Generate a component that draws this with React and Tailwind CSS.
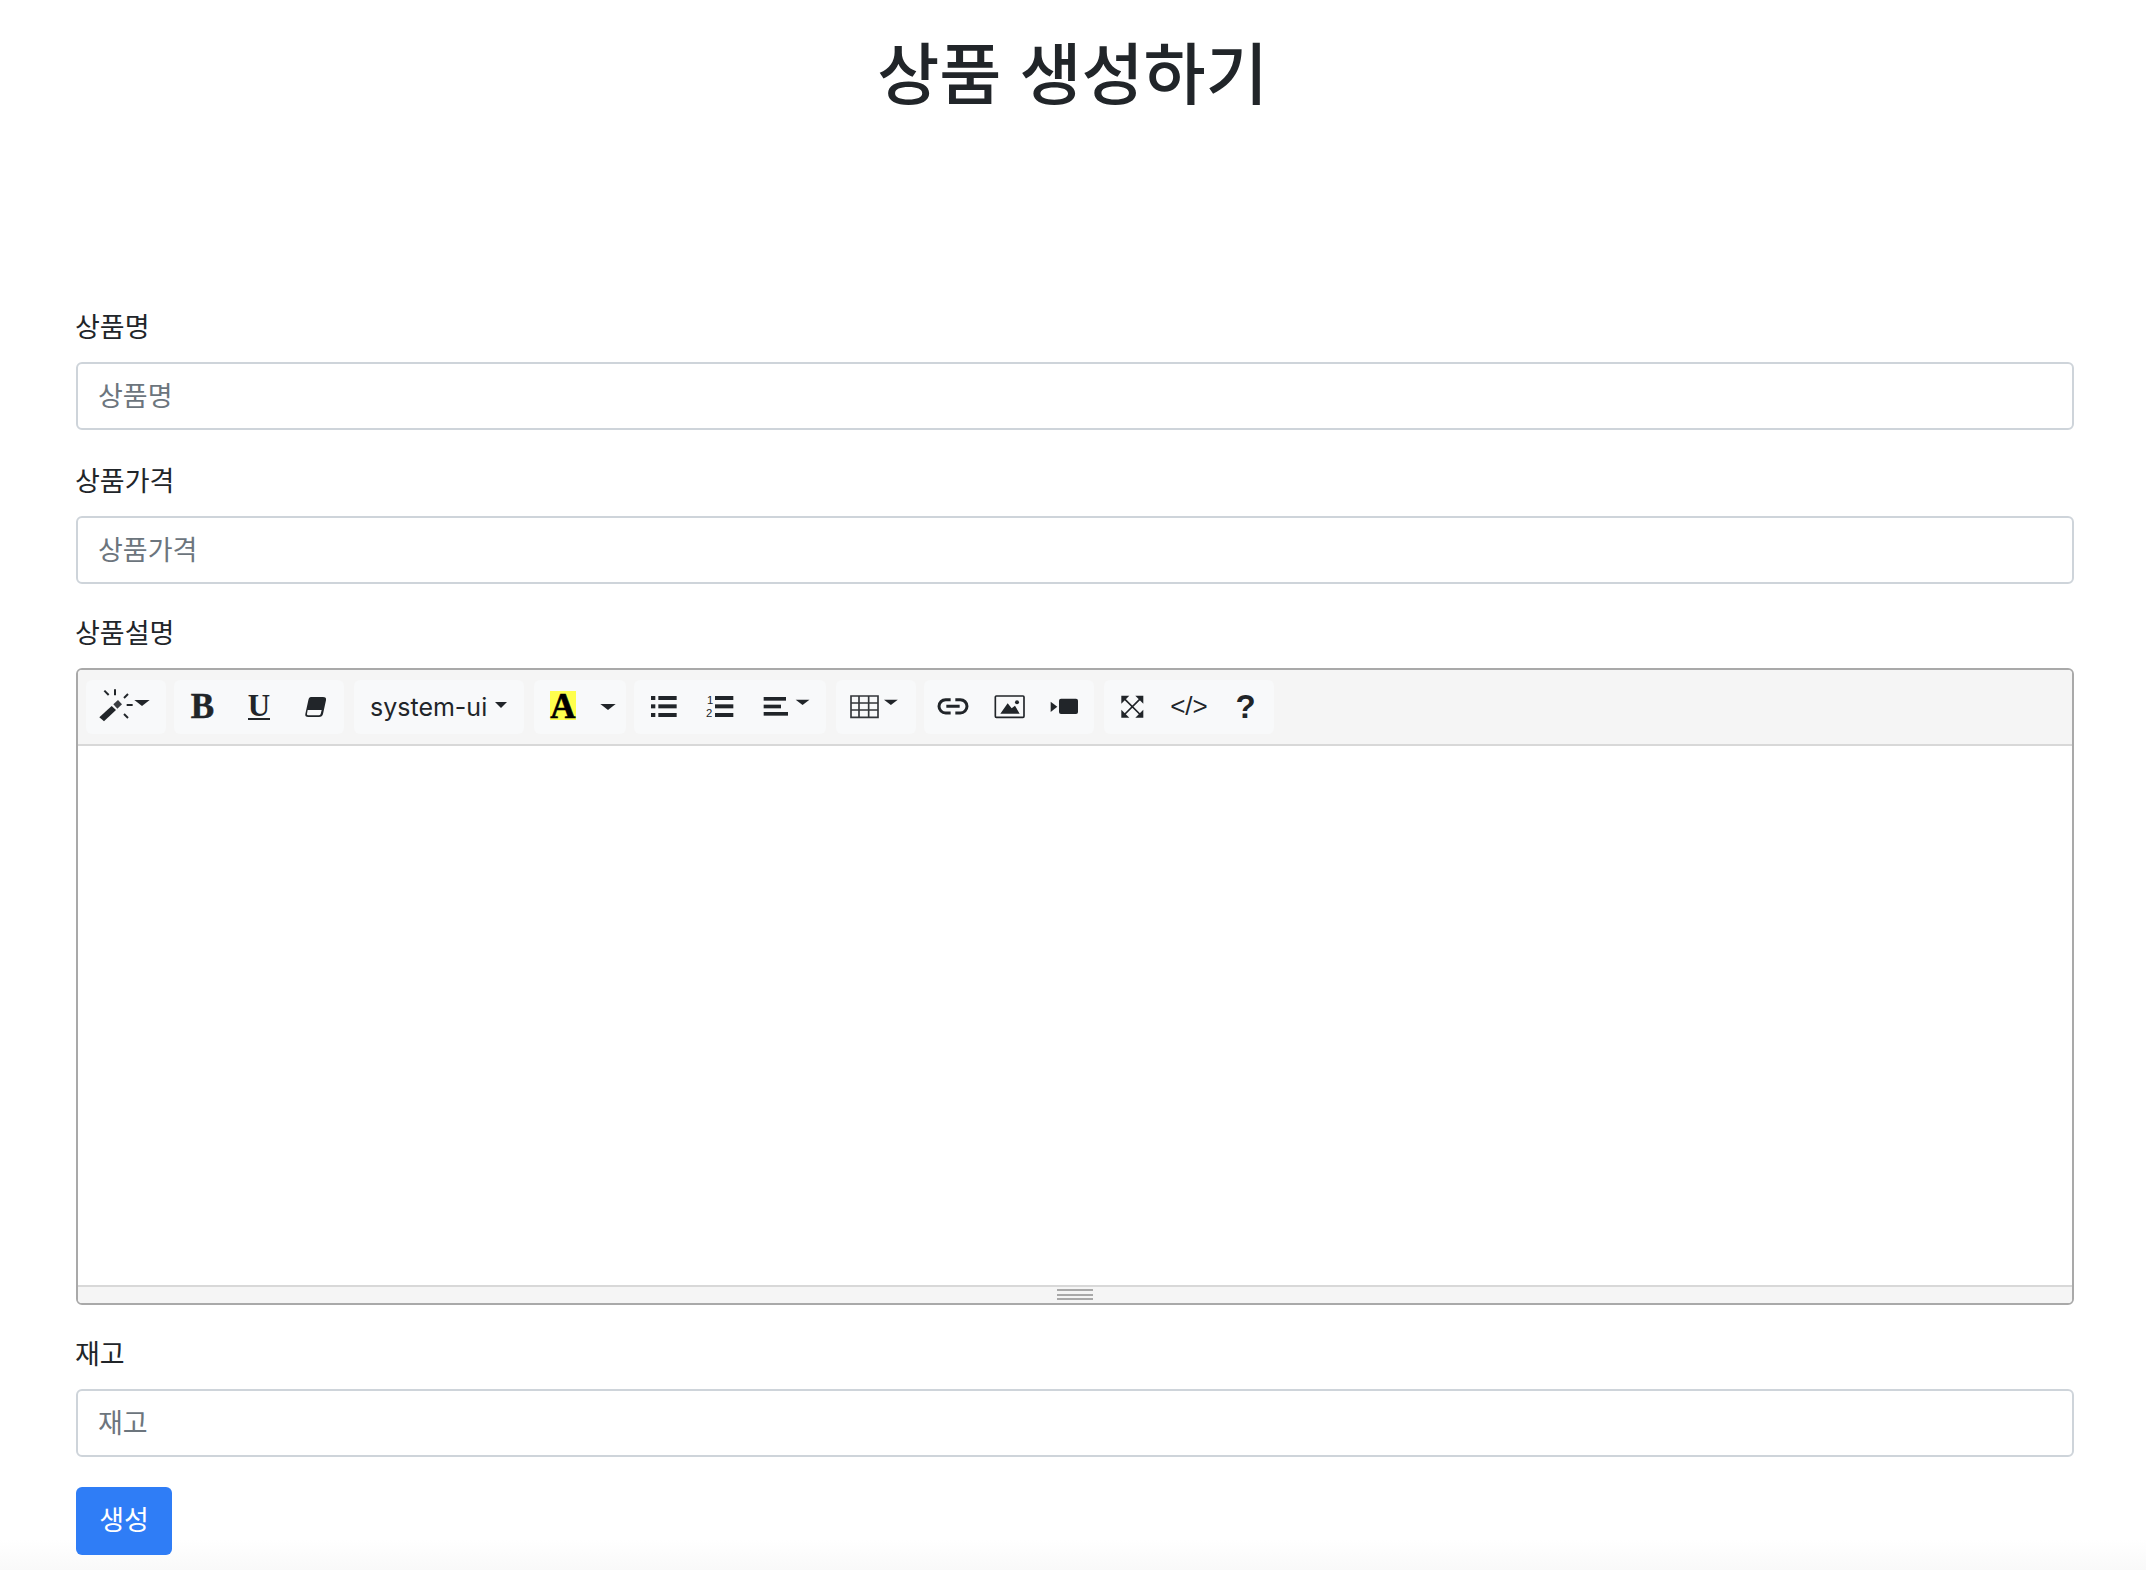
const sans = "font-['Inter','Noto_Sans_CJK_KR',sans-serif]";

function Field({ label, placeholder, className = "mt-[2px] mb-[32px]" }) {
  return (
    <div className={className}>
      <label className="block h-[36px] mb-[16px] -ml-[1px] text-[27px] leading-[36px] text-[#212529]">{label}</label>
      <input
        placeholder={placeholder}
        className="block w-full h-[68px] px-[20px] text-[27px] bg-white border-2 border-[#ced4da] rounded-[6px] outline-none placeholder:text-[#6c757d]"
      />
    </div>
  );
}

function Group({ className, children }) {
  return <div className={`flex h-[54px] bg-[#f8f9fa] rounded-[6px] ${className}`}>{children}</div>;
}

// icon drawn in coordinates of the whole button box
function Icon({ box, w, children }) {
  return (
    <svg viewBox={box} width={w} height={54} className="block shrink-0" fill="#212529">
      {children}
    </svg>
  );
}

function Caret({ x, y, s = 1 }) {
  return <polygon points={`${x},${y} ${x + 46 * s},${y} ${x + 23 * s},${y + 18 * s}`} />;
}

function TextBtn({ w, className, children }) {
  return <div className={`flex items-center justify-center text-[#212529] ${w} ${className}`}>{children}</div>;
}

function Toolbar() {
  return (
    <div className="flex h-[76px] pt-[10px] pl-[8px] bg-[#f5f5f5] border-b-2 border-[#d8d8d8]">
      <Group className="w-[80px]">
        <Icon box="78 90 240 162" w={80}>
          <polygon points="118,202 155,168 168,180 132,214" />
          <polygon points="160,163 174,150 186,163 172,176" fill="#3a3d42" />
          <g stroke="#212529" strokeWidth="6">
            <line x1="165" y1="118" x2="165" y2="136" />
            <line x1="133" y1="122" x2="146" y2="135" />
            <line x1="204" y1="132" x2="192" y2="144" />
            <line x1="200" y1="165" x2="218" y2="165" />
            <line x1="192" y1="192" x2="204" y2="204" />
          </g>
          <Caret x={223} y={150} />
        </Icon>
      </Group>

      <Group className="w-[170px] ml-[8px]">
        <TextBtn w="w-[56.67px]" className="font-['Liberation_Serif',serif] font-bold text-[35px] leading-none -mt-[2px] [-webkit-text-stroke:0.5px_#212529]">B</TextBtn>
        <TextBtn w="w-[56.67px]" className="font-['Liberation_Serif',serif] font-bold text-[31px] -mt-[2px]">
          <span className="block h-[27px] leading-[25px] border-b-2 border-[#212529]">U</span>
        </TextBtn>
        <Icon box="682 90 170 162" w={56.67}>
          <path d="M754 141H790Q801 141 799 151L790 192Q788 201 778 201H746Q735 201 737 192L746 151Q748 141 754 141Z" />
          <path d="M744 180H786L783 192Q782 196 777 196H746Q741 196 742 191Z" fill="#f8f9fa" />
        </Icon>
      </Group>

      <Group className="w-[170px] ml-[10px] items-center pl-[16px]">
        <span className={`${sans} text-[25px] text-[#212529] leading-none`}>system-ui</span>
        <svg viewBox="0 0 36 18" width={12} height={6} className="ml-[8px] -mt-[4px]" fill="#212529">
          <polygon points="0,0 36,0 18,18" />
        </svg>
      </Group>

      <Group className="w-[92px] ml-[10px]">
        <div className="w-[58px] flex items-center justify-center">
          <span className="block w-[26px] h-[29px] -mt-[4px] bg-[#ffff4d] text-center font-['Liberation_Serif',serif] font-bold text-[35px] leading-[32px] text-black [-webkit-text-stroke:0.6px_black]">A</span>
        </div>
        <Icon box="186 90 102 162" w={34}>
          <Caret x={211} y={162} />
        </Icon>
      </Group>

      <Group className="w-[192px] ml-[8px]">
        <Icon box="312 90 170 162" w={56.67}>
          <rect x="363" y="138" width="13" height="12" />
          <rect x="363" y="163" width="13" height="12" />
          <rect x="363" y="189" width="13" height="12" />
          <rect x="385" y="138" width="55" height="12" />
          <rect x="385" y="163" width="55" height="12" />
          <rect x="385" y="189" width="55" height="12" />
        </Icon>
        <Icon box="482 90 170 162" w={56.67}>
          <text x="530" y="163" fontSize="34" fontFamily="Liberation Sans, sans-serif">1</text>
          <text x="527" y="202" fontSize="34" fontFamily="Liberation Sans, sans-serif">2</text>
          <rect x="554" y="138" width="55" height="12" />
          <rect x="554" y="163" width="55" height="12" />
          <rect x="554" y="189" width="55" height="12" />
        </Icon>
        <Icon box="652 90 236 162" w={78.67}>
          <rect x="702" y="141" width="67" height="11" />
          <rect x="702" y="164" width="52" height="11" />
          <rect x="702" y="186" width="73" height="11" />
          <Caret x={798} y={149} s={0.9} />
        </Icon>
      </Group>

      <Group className="w-[80px] ml-[10px]">
        <Icon box="918 90 240 162" w={80}>
          <path
            d="M963 138H1044V202H963ZM987 138V202M1016 138V202M963 159H1044M963 180H1044"
            fill="none"
            stroke="#33363a"
            strokeWidth="5"
          />
          <Caret x={1062} y={149} s={0.9} />
        </Icon>
      </Group>

      <Group className="w-[170px] ml-[8px]">
        <Icon box="42 90 170 162" w={56.67}>
          <path
            d="M122 149H107A20 20 0 0 0 107 189H122M136 149H151A20 20 0 0 1 151 189H136M109 169H149"
            fill="none"
            stroke="#212529"
            strokeWidth="9"
          />
        </Icon>
        <Icon box="212 90 170 162" w={56.67}>
          <rect x="255" y="138" width="86" height="64" rx="3" fill="none" stroke="#212529" strokeWidth="5" />
          <polygon points="270,191 292,160 304,175 314,167 328,191" />
          <circle cx="320" cy="157" r="6" />
        </Icon>
        <Icon box="382 90 170 162" w={56.67}>
          <polygon points="423,155 443,170 423,186" />
          <rect x="448" y="146" width="57" height="46" rx="6" />
        </Icon>
      </Group>

      <Group className="w-[170px] ml-[10px]">
        <Icon box="582 90 170 162" w={56.67}>
          <polygon points="634,137 658,137 634,161" />
          <polygon points="700,137 676,137 700,161" />
          <polygon points="634,203 658,203 634,179" />
          <polygon points="700,203 676,203 700,179" />
          <path d="M642 145L692 195M692 145L642 195" stroke="#212529" strokeWidth="5" />
        </Icon>
        <TextBtn w="w-[56.67px]" className="font-['Liberation_Sans',sans-serif] text-[26px] leading-none -mt-[2px]">&lt;/&gt;</TextBtn>
        <TextBtn w="w-[56.67px]" className="font-['Liberation_Sans',sans-serif] font-bold text-[33px] leading-none -mt-[2px]">?</TextBtn>
      </Group>
    </div>
  );
}

function Editor() {
  return (
    <div className="mb-[32px] h-[637px] flex flex-col overflow-hidden border-2 border-[#a9a9a9] rounded-[6px] bg-white">
      <Toolbar />
      <div className="flex-1" />
      <div className="flex flex-col items-center h-[18px] pt-[2px] gap-[2.5px] bg-[#f5f5f5] border-t-2 border-[#d8d8d8]">
        <div className="w-[36px] h-[2px] bg-[#a9a9a9]" />
        <div className="w-[36px] h-[2px] bg-[#a9a9a9]" />
        <div className="w-[36px] h-[2px] bg-[#a9a9a9]" />
      </div>
    </div>
  );
}

export default function App() {
  return (
    <div className={`${sans} h-[1570px] pl-[76px] pr-[72px] overflow-hidden bg-[linear-gradient(to_bottom,#ffffff_1540px,#f9f9f9_1570px)]`}>
      <h1 className="pt-[33px] pr-[5px] h-[310px] text-center text-[67.5px] font-medium leading-[84px] text-[#212529]">상품 생성하기</h1>
      <Field label="상품명" placeholder="상품명" className="mb-[34px]" />
      <Field label="상품가격" placeholder="상품가격" className="mb-[32px]" />
      <label className="block h-[36px] mb-[16px] -ml-[1px] text-[27px] leading-[36px] text-[#212529]">상품설명</label>
      <Editor />
      <Field label="재고" placeholder="재고" className="mt-[1px] mb-[30px]" />
      <button className="block w-[96px] h-[68px] bg-[#2f7df6] rounded-[6px] text-[27px] text-white">생성</button>
    </div>
  );
}
